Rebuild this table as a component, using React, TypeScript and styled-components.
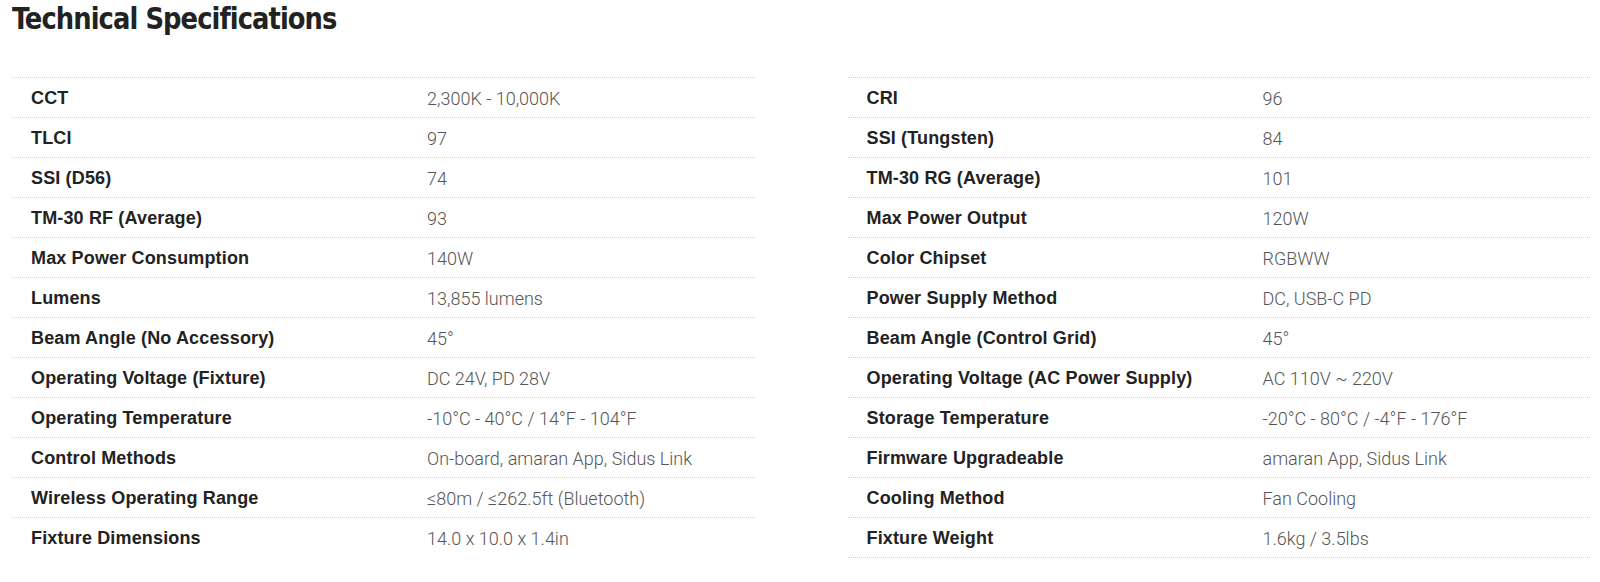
import styled, { createGlobalStyle } from "styled-components";

const GlobalStyle = createGlobalStyle`
  html, body {
    margin: 0;
    padding: 0;
    background: #fff;
  }
  body {
    font-family: "Liberation Sans", Arial, sans-serif;
  }
`;

const Section = styled.section`
  padding: 0 10px 0 12px;
`;

const TitleBar = styled.div`
  height: 77px;
`;

const Title = styled.h2`
  display: inline-block;
  margin: 0;
  font-family: "DejaVu Sans Condensed", "Liberation Sans Narrow", sans-serif;
  font-weight: 700;
  font-size: 31px;
  letter-spacing: -1px;
  color: #222;
  line-height: 36px;
  transform: scaleX(0.925);
  transform-origin: left center;
`;

const Columns = styled.div`
  display: grid;
  grid-template-columns: 1fr 1fr;
  column-gap: 93px;
`;

const Table = styled.div`
  border-top: 1px dotted #d4d4d4;
`;

const Row = styled.div<{ $hideLast?: boolean }>`
  display: grid;
  grid-template-columns: 415px 1fr;
  align-items: center;
  height: 39px;
  border-bottom: 1px dotted
    ${(p) => (p.$hideLast ? "transparent" : "#d4d4d4")};
`;

const Label = styled.div`
  padding-left: 19px;
  padding-top: 1px;
  font-family: "Liberation Sans", Arial, sans-serif;
  font-weight: 700;
  font-size: 18px;
  letter-spacing: 0.15px;
  color: #222;
`;

const Value = styled.div`
  padding-top: 1px;
  font-family: Roboto, "Liberation Sans", sans-serif;
  font-weight: 300;
  font-size: 18px;
  color: #555;
`;

type Spec = [string, string];

const left: Spec[] = [
  ["CCT", "2,300K - 10,000K"],
  ["TLCI", "97"],
  ["SSI (D56)", "74"],
  ["TM-30 RF (Average)", "93"],
  ["Max Power Consumption", "140W"],
  ["Lumens", "13,855 lumens"],
  ["Beam Angle (No Accessory)", "45°"],
  ["Operating Voltage (Fixture)", "DC 24V, PD 28V"],
  ["Operating Temperature", "-10°C - 40°C / 14°F - 104°F"],
  ["Control Methods", "On-board, amaran App, Sidus Link"],
  ["Wireless Operating Range", "≤80m / ≤262.5ft (Bluetooth)"],
  ["Fixture Dimensions", "14.0 x 10.0 x 1.4in"],
];

const right: Spec[] = [
  ["CRI", "96"],
  ["SSI (Tungsten)", "84"],
  ["TM-30 RG (Average)", "101"],
  ["Max Power Output", "120W"],
  ["Color Chipset", "RGBWW"],
  ["Power Supply Method", "DC, USB-C PD"],
  ["Beam Angle (Control Grid)", "45°"],
  ["Operating Voltage (AC Power Supply)", "AC 110V ~ 220V"],
  ["Storage Temperature", "-20°C - 80°C / -4°F - 176°F"],
  ["Firmware Upgradeable", "amaran App, Sidus Link"],
  ["Cooling Method", "Fan Cooling"],
  ["Fixture Weight", "1.6kg / 3.5lbs"],
];

const SpecTable = ({ specs, openEnd }: { specs: Spec[]; openEnd?: boolean }) => (
  <Table>
    {specs.map(([label, value], i) => (
      <Row key={label} $hideLast={openEnd && i === specs.length - 1}>
        <Label>{label}</Label>
        <Value>{value}</Value>
      </Row>
    ))}
  </Table>
);

const App = () => (
  <>
    <GlobalStyle />
    <Section>
      <TitleBar>
        <Title>Technical Specifications</Title>
      </TitleBar>
      <Columns>
        <SpecTable specs={left} openEnd />
        <SpecTable specs={right} />
      </Columns>
    </Section>
  </>
);

export default App;
